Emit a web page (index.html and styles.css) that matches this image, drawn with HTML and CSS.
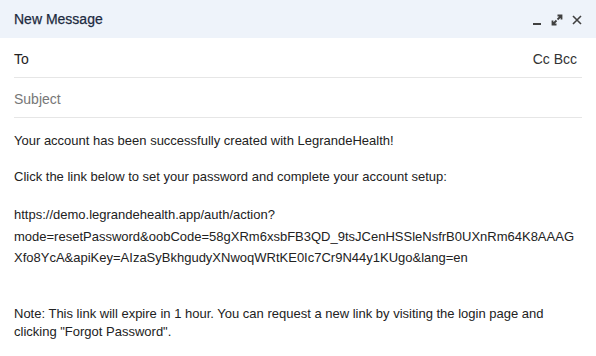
FILE: index.html
```html
<!DOCTYPE html>
<html lang="en">

<head>
    <meta charset="UTF-8">
    <meta name="viewport" content="width=device-width, initial-scale=1.0">
    <title>New Message</title>
    <link rel="stylesheet" href="styles.css">
</head>

<body>
    <div class="compose">
        <div class="compose-header">
            <span class="compose-title">New Message</span>
            <div class="window-actions">
                <button class="icon-btn" title="Minimize">
                    <svg width="10" height="12" viewBox="0 0 10 12"><rect x="1" y="9" width="8" height="2" fill="#404040"/></svg>
                </button>
                <button class="icon-btn" title="Full screen">
                    <svg width="12" height="12" viewBox="0 0 12 12" fill="none" stroke="#404040" stroke-width="1.8">
                        <path d="M6.5 1.5h4v4M10.5 1.5l-4 4M5.5 10.5h-4v-4M1.5 10.5l4-4"/>
                    </svg>
                </button>
                <button class="icon-btn" title="Close">
                    <svg width="10" height="10" viewBox="0 0 10 10" fill="none" stroke="#404040" stroke-width="1.6">
                        <path d="M1 1l8 8M9 1l-8 8"/>
                    </svg>
                </button>
            </div>
        </div>

        <div class="fields">
            <div class="field">
                <span class="field-label">To</span>
                <span class="field-extra">Cc Bcc</span>
            </div>
            <div class="field">
                <span class="field-label placeholder">Subject</span>
            </div>
        </div>

        <div class="message-body">Your account has been successfully created with LegrandeHealth!

Click the link below to set your password and complete your account setup:

<span class="reset-link">https://demo.legrandehealth.app/auth/action?mode=resetPassword&amp;oobCode=58gXRm6xsbFB3QD_9tsJCenHSSleNsfrB0UXnRm64K8AAAGXfo8YcA&amp;apiKey=AIzaSyBkhgudyXNwoqWRtKE0Ic7Cr9N44y1KUgo&amp;lang=en</span>


Note: This link will expire in 1 hour. You can request a new link by visiting the login page and clicking "Forgot Password".</div>
    </div>
</body>

</html>
```

FILE: styles.css
```css
body {
    margin: 0;
    background-color: #fff;
    font-family: "Liberation Sans", Arial, sans-serif;
}

.compose {
    width: 596px;
}

.compose-header {
    display: flex;
    justify-content: space-between;
    align-items: center;
    height: 38px;
    padding: 0 13px 0 14px;
    background-color: #eef3fa;
}

.compose-title {
    font-size: 14px;
    color: #1c2a40;
    -webkit-text-stroke: 0.25px #1c2a40;
}

.window-actions {
    display: flex;
    align-items: center;
    gap: 7px;
    padding-top: 2px;
}

.icon-btn {
    display: flex;
    align-items: center;
    justify-content: center;
    width: 13px;
    height: 14px;
    padding: 0;
    border: none;
    background: none;
    cursor: pointer;
}

.fields {
    margin: 0 14px;
}

.field {
    display: flex;
    justify-content: space-between;
    align-items: center;
    height: 36px;
    padding: 3px 5px 0 0;
    border-bottom: 1px solid #e6e6e6;
    font-size: 14px;
}

.field-label {
    color: #222;
}

.field-label.placeholder {
    color: #777;
}

.field-extra {
    color: #333;
}

.message-body {
    padding: 14px 14px;
    font-size: 13px;
    line-height: 18px;
    color: #222;
    white-space: pre-wrap;
    overflow-wrap: anywhere;
}

.reset-link {
    line-height: 21.5px;
}
```
